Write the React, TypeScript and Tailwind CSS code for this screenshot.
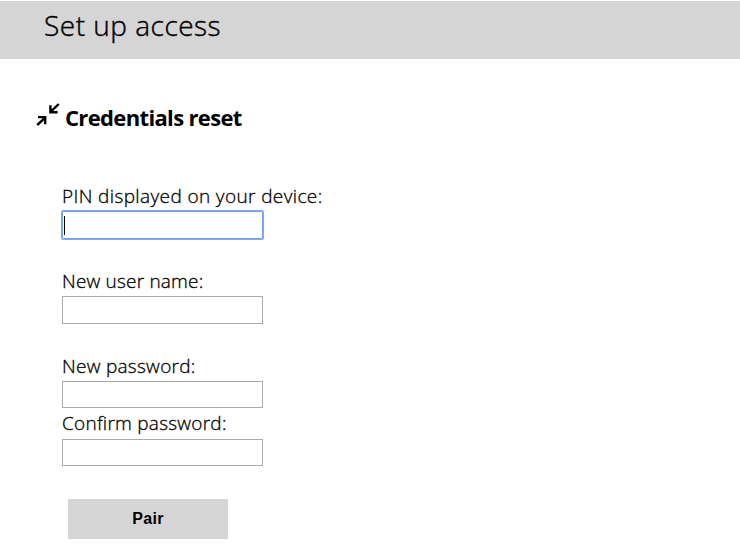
import type { ReactNode } from "react";

function ResetIcon() {
  return (
    <svg width="24" height="26" viewBox="0 0 24 26" fill="none" stroke="#000" strokeWidth="2.4" className="shrink-0">
      <path d="M1.2 23L9 15.8M2 15.1H9.2V22.2" />
      <path d="M22.8 2L15 9.4M14.4 3.2V10.2H21.6" />
    </svg>
  );
}

function Field({ className, label, children }: { className: string; label: ReactNode; children: ReactNode }) {
  return (
    <label
      className={`flex flex-col text-[19px] leading-7 font-light whitespace-nowrap [-webkit-text-stroke:0.3px_black] ${className}`}
    >
      {label}
      {children}
    </label>
  );
}

export default function App() {
  return (
    <div className="flex h-[558px] w-[740px] flex-col overflow-hidden bg-white pt-px font-['Open_Sans',sans-serif] text-black">
      <header className="h-[58px] shrink-0 bg-[#d5d5d5] pl-[44px]">
        <h1 className="text-[28px] leading-[48px] font-light tracking-[0.5px] [-webkit-text-stroke:0.4px_black]">
          Set up access
        </h1>
      </header>
      <h2 className="mt-[43px] flex h-[32px] shrink-0 pl-[36px]">
        <ResetIcon />
        <span className="ml-[5px] text-[22px] leading-[30px] font-bold tracking-[-0.65px]">Credentials reset</span>
      </h2>
      <form className="mt-[48px] flex flex-col items-start pl-[62px]">
        <Field className="h-[85px]" label={<span className="tracking-[0.38px]">PIN displayed on your device:</span>}>
          <span className="mt-px flex h-[28px] w-[201px] items-center rounded-[1px] border border-[#76a1e8] pl-px ring-1 ring-[#7eaaf0]">
            <span className="h-[19px] w-px bg-black" />
          </span>
        </Field>
        <Field className="h-[85px]" label={<span className="tracking-[0.2px]">New user name:</span>}>
          <input className="mt-px h-[28px] w-[201px] border border-[#a9a9a9]" />
        </Field>
        <Field className="h-[57px]" label={<span className="tracking-[0.28px]">New password:</span>}>
          <input type="password" className="mt-px h-[27px] w-[201px] border border-[#a9a9a9]" />
        </Field>
        <Field className="h-[57px]" label={<span className="tracking-[0.25px]">Confirm password:</span>}>
          <input type="password" className="mt-[2px] h-[27px] w-[201px] border border-[#a9a9a9]" />
        </Field>
        <button
          type="button"
          className="mt-[33px] ml-[6px] h-[40px] w-[160px] bg-[#d5d5d5] font-['Liberation_Sans',sans-serif] text-[16px] font-bold tracking-[0.3px]"
        >
          Pair
        </button>
      </form>
    </div>
  );
}
